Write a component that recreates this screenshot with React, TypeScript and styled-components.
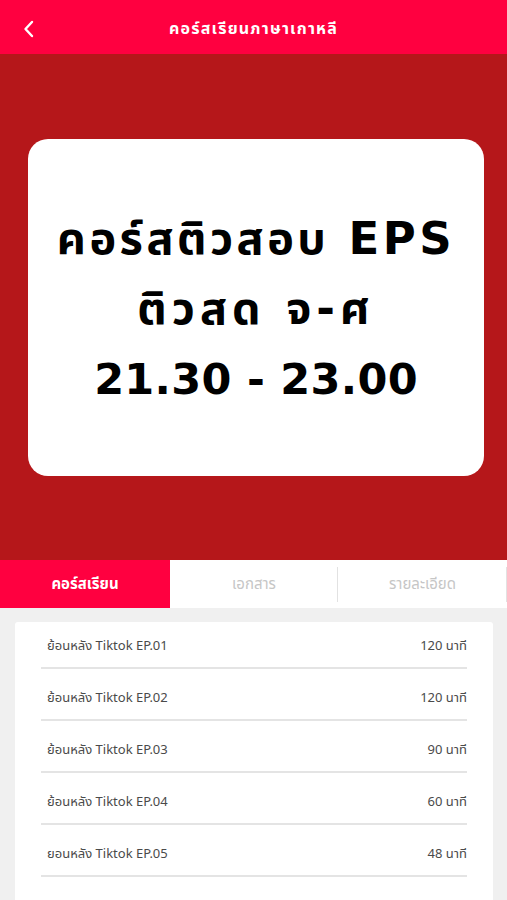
import React, { useState } from "react";
import styled, { createGlobalStyle } from "styled-components";

const Global = createGlobalStyle`
  html, body { margin: 0; padding: 0; background: #f0f0f0; }
  body { font-family: "Noto Sans", "Noto Sans Thai", "DejaVu Sans", sans-serif; }
  * { box-sizing: border-box; }
`;

const Page = styled.div`
  width: 507px;
  min-height: 900px;
  display: flex;
  flex-direction: column;
  background: #f0f0f0;
`;

const Header = styled.header`
  height: 54px;
  background: #ff0040;
  display: grid;
  grid-template-columns: 60px 1fr 60px;
  align-items: center;
  color: #fff;
  padding-top: 3px;
`;

const BackButton = styled.button`
  background: none;
  border: none;
  padding: 0 0 0 22px;
  display: flex;
  align-items: center;
  color: #fff;
  cursor: pointer;
`;

const Title = styled.h1`
  margin: 0;
  text-align: center;
  font-size: 16px;
  font-weight: 700;
  letter-spacing: 1.2px;
`;

const Banner = styled.section`
  height: 506px;
  background: #b5171a;
  display: flex;
  align-items: center;
  justify-content: center;
  padding: 0 23px 0 28px;
`;

const BannerCard = styled.div`
  width: 456px;
  height: 337px;
  background: #fff;
  border-radius: 20px;
  display: flex;
  flex-direction: column;
  align-items: center;
  justify-content: center;
  padding-top: 4px;
`;

const BannerLine = styled.div<{ $spacing?: number; $size?: number }>`
  font-family: "DejaVu Sans", "Noto Sans Thai", "Noto Sans", sans-serif;
  font-size: ${(p) => p.$size ?? 43}px;
  font-weight: 700;
  line-height: 70px;
  letter-spacing: ${(p) => p.$spacing ?? 0}px;
  color: #000;
  white-space: nowrap;
`;

const Tabs = styled.nav`
  height: 48px;
  background: #fff;
  display: grid;
  grid-template-columns: 170px 168px 169px;
`;

const Tab = styled.button<{ $active?: boolean; $divider?: boolean }>`
  border: none;
  font-family: inherit;
  font-size: 15px;
  font-weight: ${(p) => (p.$active ? 700 : 400)};
  color: ${(p) => (p.$active ? "#fff" : "#c6c6c6")};
  background: ${(p) => (p.$active ? "#ff0040" : "#fff")};
  display: flex;
  align-items: center;
  justify-content: center;
  position: relative;
  cursor: pointer;
  &::after {
    content: "";
    display: ${(p) => (p.$divider ? "block" : "none")};
    position: absolute;
    right: 0;
    top: 7px;
    bottom: 6px;
    width: 1px;
    background: #e2e2e2;
  }
`;

const Content = styled.main`
  padding: 14px 14px 0 15px;
  flex: 1;
`;

const ListCard = styled.div`
  background: #fff;
  border-radius: 3px;
  padding: 0 26px;
  min-height: 300px;
`;

const Row = styled.div`
  height: 52px;
  display: flex;
  align-items: center;
  justify-content: space-between;
  border-bottom: 2px solid #e4e4e4;
  padding: 8px 0 0 6px;
  font-size: 13px;
  color: #4a4a4a;
  &:first-child {
    height: 47px;
    padding-top: 3px;
  }
`;

const RowTitle = styled.span``;
const RowDuration = styled.span``;

const episodes = [
  { title: "ย้อนหลัง Tiktok EP.01", duration: "120 นาที" },
  { title: "ย้อนหลัง Tiktok EP.02", duration: "120 นาที" },
  { title: "ย้อนหลัง Tiktok EP.03", duration: "90 นาที" },
  { title: "ย้อนหลัง Tiktok EP.04", duration: "60 นาที" },
  { title: "ยอนหลัง Tiktok EP.05", duration: "48 นาที" },
];

export default function App() {
  const [tab, setTab] = useState(0);
  const tabs = ["คอร์สเรียน", "เอกสาร", "รายละเอียด"];
  return (
    <Page>
      <Global />
      <Header>
        <BackButton aria-label="back">
          <svg width="14" height="20" viewBox="0 0 14 20" fill="none">
            <path d="M10 3 L3.5 10 L10 17" stroke="#fff" strokeWidth="2.4" strokeLinecap="round" strokeLinejoin="round" />
          </svg>
        </BackButton>
        <Title>คอร์สเรียนภาษาเกาหลี</Title>
        <span />
      </Header>
      <Banner>
        <BannerCard>
          <BannerLine $size={45} $spacing={3.5}>คอร์สติวสอบ EPS</BannerLine>
          <BannerLine $size={45} $spacing={5}>ติวสด จ-ศ</BannerLine>
          <BannerLine $spacing={0.3}>21.30 - 23.00</BannerLine>
        </BannerCard>
      </Banner>
      <Tabs>
        {tabs.map((t, i) => (
          <Tab key={t} $active={tab === i} $divider={i > 0} onClick={() => setTab(i)}>
            {t}
          </Tab>
        ))}
      </Tabs>
      <Content>
        <ListCard>
          {episodes.map((e) => (
            <Row key={e.title}>
              <RowTitle>{e.title}</RowTitle>
              <RowDuration>{e.duration}</RowDuration>
            </Row>
          ))}
        </ListCard>
      </Content>
    </Page>
  );
}
